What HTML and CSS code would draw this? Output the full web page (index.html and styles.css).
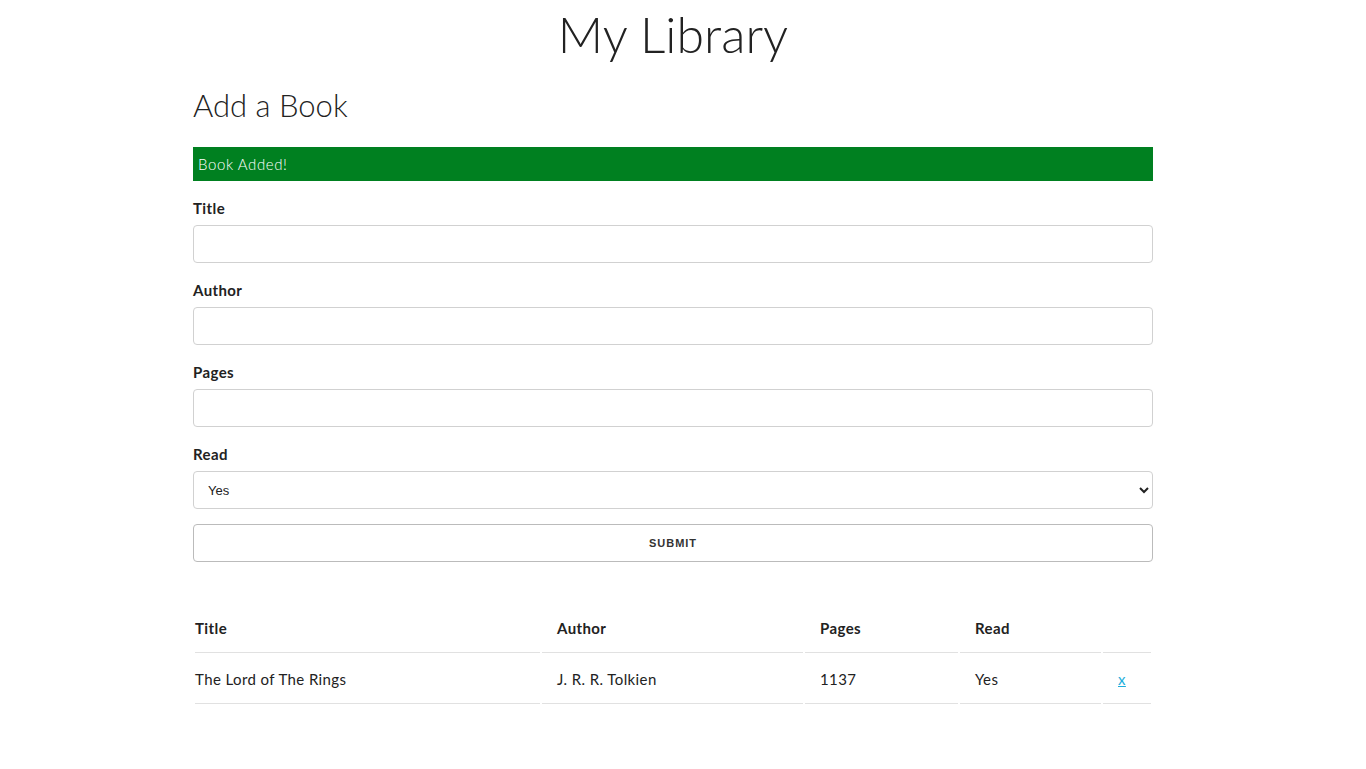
FILE: index.html
```html
<!DOCTYPE html>
<html lang="en">
<head>
<meta charset="utf-8">
<title>My Library</title>
<link rel="stylesheet" href="styles.css">
</head>
<body>
<div class="container">
  <h1 class="page-title">My Library</h1>
  <h4 class="section-title">Add a Book</h4>
  <div class="alert">Book Added!</div>
  <form class="book-form">
    <label class="field-label" for="title">Title</label>
    <input class="field" id="title" type="text">
    <label class="field-label" for="author">Author</label>
    <input class="field" id="author" type="text">
    <label class="field-label" for="pages">Pages</label>
    <input class="field" id="pages" type="text">
    <label class="field-label" for="read">Read</label>
    <select class="field select" id="read">
      <option>Yes</option>
      <option>No</option>
    </select>
    <button class="submit" type="button">Submit</button>
  </form>
  <table class="books">
    <colgroup>
      <col class="c-title">
      <col class="c-author">
      <col class="c-pages">
      <col class="c-read">
      <col class="c-del">
    </colgroup>
    <thead>
      <tr><th>Title</th><th>Author</th><th>Pages</th><th>Read</th><th></th></tr>
    </thead>
    <tbody>
      <tr><td>The Lord of The Rings</td><td>J. R. R. Tolkien</td><td>1137</td><td>Yes</td><td><a class="del" href="#">x</a></td></tr>
    </tbody>
  </table>
</div>
</body>
</html>
```
FILE: styles.css
```css
html, body {
  margin: 0;
  padding: 0;
  background: #fff;
}
body {
  padding-right: 20px;
  font-family: "Lato", "Open Sans", sans-serif;
  font-size: 15px;
  line-height: 24px;
  letter-spacing: 0.4px;
  color: #222;
}
.container {
  width: 960px;
  margin: 0 auto;
}
.page-title {
  margin: 4px 0 21px;
  font-size: 50px;
  line-height: 60px;
  font-weight: 300;
  text-align: center;
  letter-spacing: 0;
}
.section-title {
  margin: 0 0 22px;
  font-size: 31px;
  line-height: 40px;
  font-weight: 300;
  letter-spacing: 0;
}
.alert {
  background: #008020;
  color: #fff;
  font-weight: 300;
  letter-spacing: 0.6px;
  padding: 5px 5px;
  margin-bottom: 15px;
}
.book-form {
  margin: 0;
}
.field-label {
  display: block;
  font-weight: 700;
  margin-bottom: 5px;
}
.field {
  display: block;
  box-sizing: border-box;
  width: 100%;
  height: 38px;
  padding: 6px 10px;
  border: 1px solid #d1d1d1;
  border-radius: 4px;
  background: #fff;
  margin: 0 0 15px;
  font-family: "Lato", sans-serif;
  font-size: 15px;
}
.select {
  font-family: "Liberation Sans", Arial, sans-serif;
  font-size: 13px;
  letter-spacing: 0;
  color: #222;
  padding: 6px 10px;
}
.submit {
  display: block;
  box-sizing: border-box;
  width: 100%;
  height: 38px;
  padding: 0 30px;
  background: transparent;
  border: 1px solid #bbb;
  border-radius: 4px;
  color: #333;
  font-family: "Liberation Sans", Arial, sans-serif;
  font-size: 11px;
  font-weight: 700;
  letter-spacing: 1px;
  text-transform: uppercase;
  margin: 0 0 40px;
}
.books {
  width: 100%;
  table-layout: fixed;
  border-spacing: 2px;
}
.c-title { width: 345px; }
.c-author { width: 261px; }
.c-pages { width: 153px; }
.c-read { width: 141px; }
.c-del { width: 48px; }
.books th,
.books td {
  text-align: left;
  padding: 12px 15px;
  border-bottom: 1px solid #e1e1e1;
}
.books th {
  font-weight: 700;
}
.books th:first-child,
.books td:first-child {
  padding-left: 0;
}
.books th:last-child,
.books td:last-child {
  padding-right: 0;
}
.del {
  color: #1eaedb;
}
```
